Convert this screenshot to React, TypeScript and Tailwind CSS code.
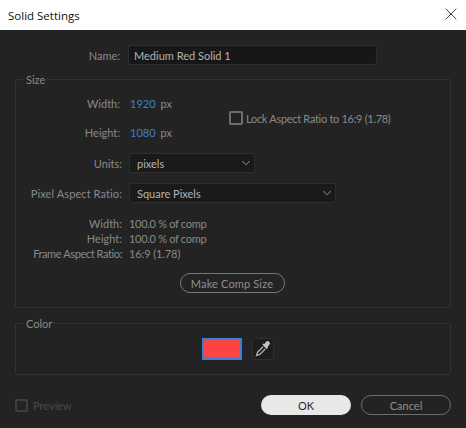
import React from "react";
import { X, ChevronDown } from "lucide-react";

function Select({ text, width }: { text: string; width: string }) {
  return (
    <div className={`flex h-[20px] items-center justify-between rounded-[2px] border border-[#2e2e2e] bg-[#1a1a1a] pl-[7px] pr-[1px] text-[#b4b4b4] ${width}`}>
      <span>{text}</span>
      <ChevronDown size={14} strokeWidth={1.4} className="text-[#b0b0b0]" />
    </div>
  );
}

export default function App() {
  return (
    <div className="flex h-[428px] w-[466px] flex-col overflow-hidden bg-[#232323] font-['Lato',sans-serif] text-[11px] leading-[15px] text-[#8a8a8a]">
      <div className="flex h-[30px] shrink-0 items-center justify-between bg-white pl-[8px] pr-[5px] font-['Open_Sans',sans-serif] text-[11.5px] text-[#111]">
        <span>Solid Settings</span>
        <X size={20} strokeWidth={1} className="mb-[2px] text-[#222]" />
      </div>

      <div className="flex flex-1 flex-col px-[15px]">
        <div className="mt-[15px] flex h-[20px] items-center">
          <span className="w-[105px] text-right">Name:</span>
          <div className="ml-[8px] flex h-[20px] w-[249px] items-center rounded-[2px] border border-[#2e2e2e] bg-[#171717] pl-[5px] text-[#b4b4b4]">
            Medium Red Solid 1
          </div>
        </div>

        <fieldset className="mt-[7px] h-[236px] rounded-[2px] border border-[#333333] pb-0">
          <legend className="ml-[8px] px-[2px] leading-[15px] text-[#8a8a8a]">Size</legend>
          <div className="flex h-[60px] pt-[2px]">
            <div className="flex w-[198px] flex-col">
              <div className="flex h-[30px] items-center">
                <span className="w-[104px] text-right">Width:</span>
                <span className="ml-[10px] text-[#3d7fc9]">1920</span>
                <span className="ml-[5px]">px</span>
              </div>
              <div className="flex h-[30px] items-center">
                <span className="w-[104px] text-right">Height:</span>
                <span className="ml-[10px] text-[#3d7fc9]">1080</span>
                <span className="ml-[5px]">px</span>
              </div>
            </div>
            <div className="ml-[15px] flex items-center">
              <div className="h-[14px] w-[14px] rounded-[2px] border-2 border-[#6e6e6e]" />
              <span className="ml-[3px] tracking-[-0.3px]">Lock Aspect Ratio to 16:9 (1.78)</span>
            </div>
          </div>

          <div className="mt-[6px] flex h-[20px] items-center">
            <span className="w-[106px] text-right">Units:</span>
            <Select text="pixels" width="ml-[7px] w-[126px]" />
          </div>
          <div className="mt-[10px] flex h-[20px] items-center">
            <span className="w-[106px] text-right tracking-[0.1px]">Pixel Aspect Ratio:</span>
            <Select text="Square Pixels" width="ml-[7px] w-[207px]" />
          </div>

          <div className="mt-[13px] flex flex-col">
            <div className="flex h-[15px] items-center">
              <span className="w-[106px] text-right">Width:</span>
              <span className="ml-[7px] tracking-[-0.3px]">100.0 % of comp</span>
            </div>
            <div className="flex h-[15px] items-center">
              <span className="w-[106px] text-right">Height:</span>
              <span className="ml-[7px] tracking-[-0.3px]">100.0 % of comp</span>
            </div>
            <div className="flex h-[15px] items-center">
              <span className="w-[106px] text-right tracking-[-0.4px]">Frame Aspect Ratio:</span>
              <span className="ml-[7px] tracking-[-0.1px]">16:9 (1.78)</span>
            </div>
          </div>

          <div className="mt-[12px] flex justify-center pr-[2px]">
            <div className="flex h-[20px] w-[105px] items-center justify-center rounded-full border border-[#777] tracking-[0.15px] text-[#8f8f8f]">
              Make Comp Size
            </div>
          </div>
        </fieldset>

        <fieldset className="mt-[8px] h-[59px] rounded-[2px] border border-[#333333]">
          <legend className="ml-[8px] px-[2px] leading-[15px]">Color</legend>
          <div className="flex items-start justify-center pl-[10px] pt-[7px]">
            <div className="h-[22px] w-[40px] border-2 border-[#3a7fd0] bg-[#fb4545]" />
            <div className="ml-[10px] flex h-[22px] w-[22px] items-center justify-center rounded-[2px] border border-[#2e2e2e] bg-[#1d1d1d]">
              <svg width="18" height="18" viewBox="0 0 18 18" fill="none">
                <path d="M12 1.8a2.2 2.2 0 0 1 3.2 3.2l-1.7 1.7.7.7-1.6 1.6-4.2-4.2 1.6-1.6.7.7z" fill="#c4c4c4" />
                <path d="M9 6.8 3.6 12.2 2.5 15.5 5.8 14.4 11.2 9" stroke="#b0b0b0" strokeWidth="1.3" />
              </svg>
            </div>
          </div>
        </fieldset>

        <div className="mt-[20px] flex h-[20px] items-center">
          <div className="h-[13px] w-[13px] rounded-[2px] border-2 border-[#3f3f3f]" />
          <span className="ml-[5px] text-[#4a4a4a]">Preview</span>
          <div className="ml-auto flex gap-[10px]">
            <div className="flex h-[20px] w-[90px] items-center justify-center rounded-full bg-[#e8e8e8] text-[#2a2a2a]">OK</div>
            <div className="flex h-[20px] w-[90px] items-center justify-center rounded-full border border-[#6e6e6e] text-[#8f8f8f]">Cancel</div>
          </div>
        </div>
      </div>
    </div>
  );
}
